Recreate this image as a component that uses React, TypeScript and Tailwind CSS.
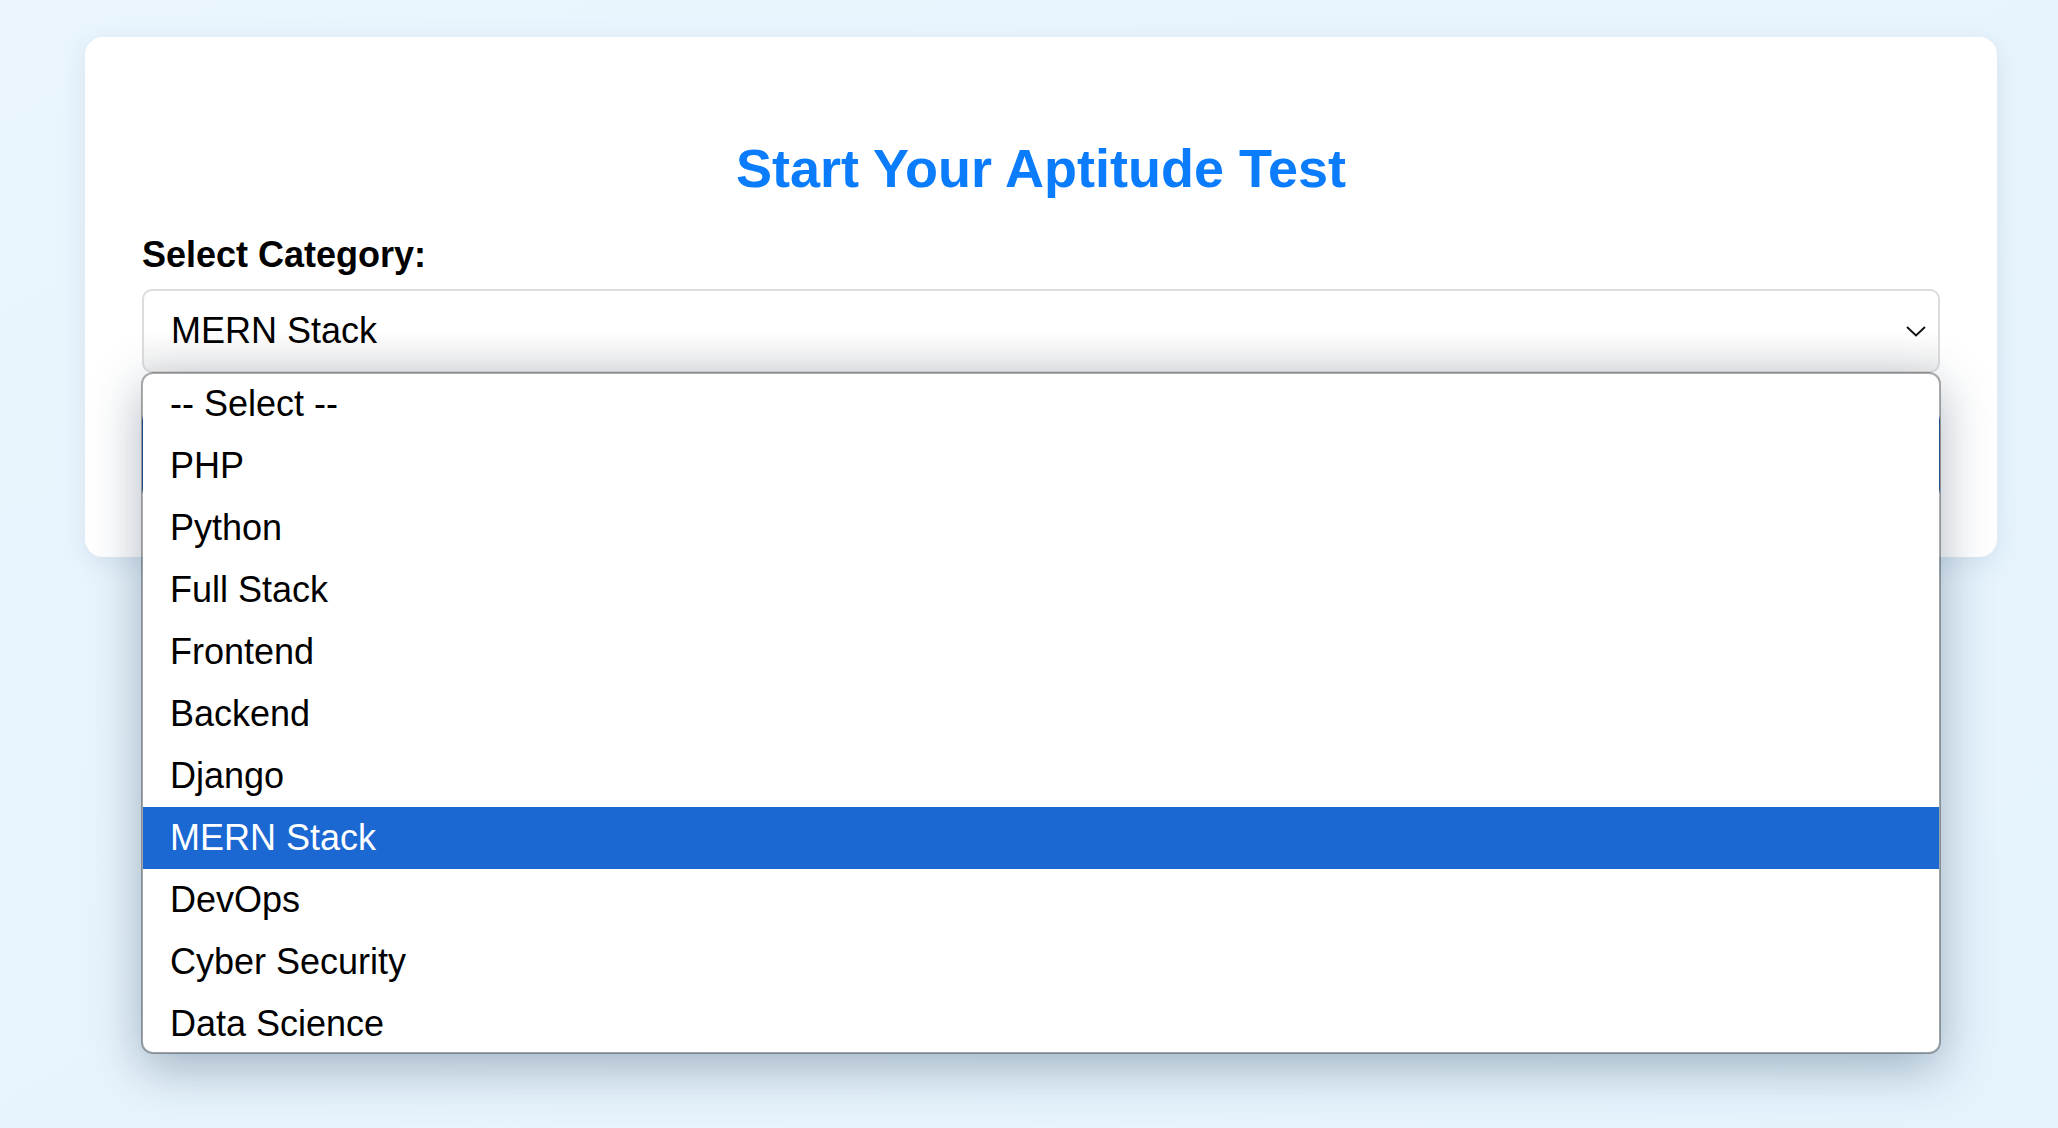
import React from "react";

const options = [
  "-- Select --",
  "PHP",
  "Python",
  "Full Stack",
  "Frontend",
  "Backend",
  "Django",
  "MERN Stack",
  "DevOps",
  "Cyber Security",
  "Data Science",
];

export default function App() {
  return (
    <div
      className="relative w-[2058px] h-[1128px] overflow-hidden bg-gradient-to-br from-[#eaf5fd] to-[#e5f3fd] pt-[37px]"
      style={{ fontFamily: '"Liberation Sans", Arial, sans-serif' }}
    >
      <div className="ml-[85px] w-[1912px] rounded-[18px] bg-white shadow-[0_6px_24px_rgba(120,150,180,0.18)] px-[57px] pt-[100px] pb-[58px]">
        <h2 className="text-center text-[54px] leading-[62px] font-bold text-[#0a7cfc]">
          Start Your Aptitude Test
        </h2>
        <label className="block mt-[35px] text-[36px] leading-[41px] font-bold text-black">
          Select Category:
        </label>
        <div className="mt-[14px] h-[84px] rounded-[10px] border-2 border-[#dcdcdc] bg-gradient-to-b from-white via-white to-[#f0f0f0] flex items-center justify-between pl-[27px] pr-[12px]">
          <span className="text-[36px] text-black">MERN Stack</span>
          <svg width="20" height="11" viewBox="0 0 20 11">
            <polyline points="1,1 10,9.5 19,1" fill="none" stroke="#111" strokeWidth="1.9" />
          </svg>
        </div>
        <div className="mt-[37px] h-[89px] rounded-[10px] bg-[#2f72c8]" />
      </div>

      <div className="absolute left-[141px] top-[372px] w-[1800px] h-[682px] rounded-[12px] border-2 border-[rgba(0,0,0,0.32)] bg-clip-padding bg-white shadow-[0_14px_50px_rgba(30,55,80,0.35)] overflow-hidden">
        <div className="-mt-[1px]">
          {options.map((o) => (
            <div
              key={o}
              className={
                o === "MERN Stack"
                  ? "h-[62px] flex items-center pl-[27px] text-[36px] bg-[#1b68d3] text-white"
                  : "h-[62px] flex items-center pl-[27px] text-[36px] text-black"
              }
            >
              {o}
            </div>
          ))}
        </div>
      </div>
    </div>
  );
}
